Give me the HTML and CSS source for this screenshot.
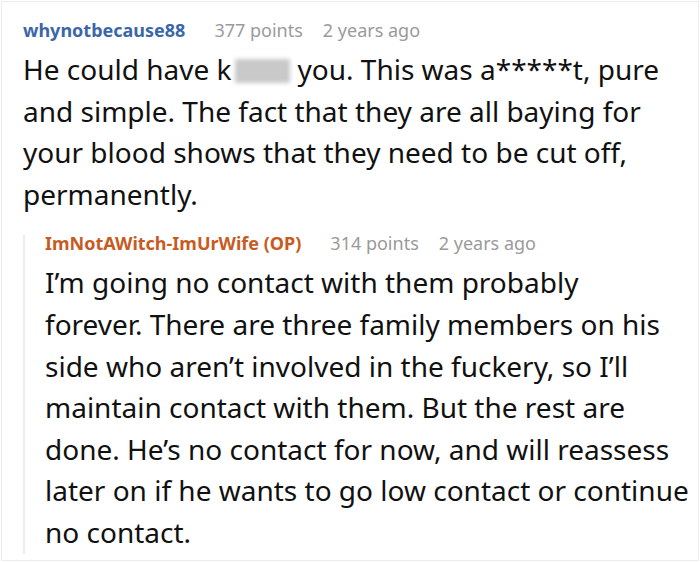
FILE: index.html
```html
<!DOCTYPE html>
<html>
<head>
<meta charset="utf-8">
<link rel="stylesheet" href="styles.css">
</head>
<body>
<div class="frame">
  <div class="comment">
    <div class="meta">
      <span class="user">whynotbecause88</span>
      <span class="info">377 points</span>
      <span class="info">2 years ago</span>
    </div>
    <p class="body">He could have k<span class="blur"></span>you. This was a*****t, pure and simple. The fact that they are all baying for your blood shows that they need to be cut off, permanently.</p>
    <div class="reply">
      <div class="meta">
        <span class="user op">ImNotAWitch-ImUrWife (OP)</span>
        <span class="info">314 points</span>
        <span class="info">2 years ago</span>
      </div>
      <p class="body">I’m going no contact with them probably<br>forever. There are three family members on his side who aren’t involved in the fuckery, so I’ll maintain contact with them. But the rest are done. He’s no contact for now, and will reassess later on if he wants to go low contact or continue no contact.</p>
    </div>
  </div>
</div>
</body>
</html>
```
FILE: styles.css
```css
html, body {
  margin: 0;
  padding: 0;
  background: #fff;
}
body {
  font-family: "Noto Sans", "Open Sans", sans-serif;
  color: #111;
}
.frame {
  width: 698px;
  height: 560px;
  border: 1px solid #ececec;
  box-sizing: border-box;
  margin: 1px 1px 0 1px;
  overflow: hidden;
}
.comment {
  padding: 20px 0 0 21px;
}
.meta {
  display: flex;
  font-size: 18px;
  line-height: 16px;
}
.user {
  font-weight: 700;
  color: #3b67a8;
  margin-right: 29px;
}
.user.op {
  color: #c75b22;
}
.info {
  color: #9a9a9a;
  margin-right: 20px;
}
.body {
  margin: 11px 0 0 0;
  font-size: 28px;
  line-height: 41.6px;
}
.blur {
  display: inline-block;
  width: 55px;
  height: 24px;
  vertical-align: -3px;
  background: #c9c9c9;
  filter: blur(2px);
  margin-right: 8px;
  margin-left: 3px;
}
.reply {
  margin-top: 20px;
  border-left: 2px solid #ededed;
  padding-left: 20px;
}
.reply .body {
  margin-top: 11px;
  margin-bottom: -12px;
}
```
